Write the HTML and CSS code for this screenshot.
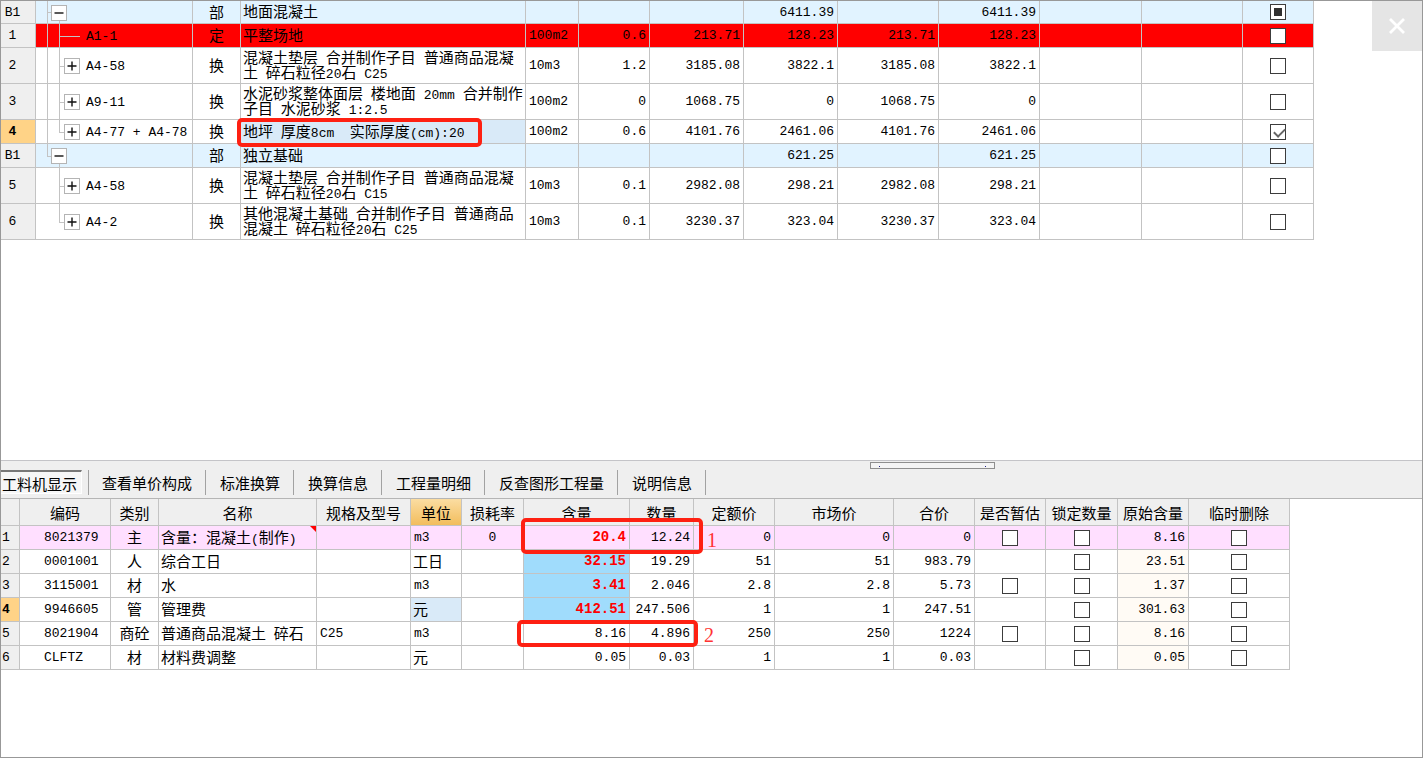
FILE: index.html
```html
<!DOCTYPE html>
<html lang="zh-CN">
<head>
<meta charset="utf-8">
<title>工料机显示</title>
<link rel="stylesheet" href="styles.css">
</head>
<body>
<svg class="defs" aria-hidden="true">
  <symbol id="plus" viewBox="0 0 14 14"><path d="M2.5 7h9M7 2.5v9" stroke="#111" stroke-width="1.4" fill="none"/></symbol>
  <symbol id="minus" viewBox="0 0 14 14"><path d="M2.5 7h9" stroke="#111" stroke-width="1.4" fill="none"/></symbol>
</svg>
<main class="window">
  <section class="pane upper">
    <table class="grid items">
      <colgroup><col class="w35"><col class="w157"><col class="w48"><col class="w285"><col class="w53"><col class="w71"><col class="w94"><col class="w94"><col class="w101"><col class="w101"><col class="w102"><col class="w101"><col class="w71"></colgroup>
      <tbody>
        <tr class="first section"><th scope="row">B1</th><td class="tree root open"><button class="toggle" aria-label="折叠"><svg><use href="#minus"/></svg></button></td><td class="kind">部</td><td class="name">地面混凝土</td><td></td><td></td><td></td><td class="num">6411.39</td><td></td><td class="num">6411.39</td><td></td><td></td><td class="check"><input type="checkbox" class="partial" aria-label="地面混凝土"></td></tr>
        <tr class="alert"><th scope="row">1</th><td class="tree leaf outer"><span class="code">A1-1</span></td><td class="kind">定</td><td class="name">平整场地</td><td class="unit">100m2</td><td class="num">0.6</td><td class="num">213.71</td><td class="num">128.23</td><td class="num">213.71</td><td class="num">128.23</td><td></td><td></td><td class="check"><input type="checkbox" aria-label="A1-1"></td></tr>
        <tr class="tall"><th scope="row">2</th><td class="tree child outer"><button class="toggle" aria-label="展开"><svg><use href="#plus"/></svg></button><span class="code">A4-58</span></td><td class="kind">换</td><td class="name">混凝土垫层<span class="n"> </span>合并制作子目<span class="n"> </span>普通商品混凝<br>土<span class="n"> </span>碎石粒径<span class="n">20</span>石<span class="n"> C25</span></td><td class="unit">10m3</td><td class="num">1.2</td><td class="num">3185.08</td><td class="num">3822.1</td><td class="num">3185.08</td><td class="num">3822.1</td><td></td><td></td><td class="check"><input type="checkbox" aria-label="A4-58"></td></tr>
        <tr class="tall"><th scope="row">3</th><td class="tree child outer"><button class="toggle" aria-label="展开"><svg><use href="#plus"/></svg></button><span class="code">A9-11</span></td><td class="kind">换</td><td class="name">水泥砂浆整体面层<span class="n"> </span>楼地面<span class="n"> 20mm </span>合并制作<br>子目<span class="n"> </span>水泥砂浆<span class="n"> 1:2.5</span></td><td class="unit">100m2</td><td class="num">0</td><td class="num">1068.75</td><td class="num">0</td><td class="num">1068.75</td><td class="num">0</td><td></td><td></td><td class="check"><input type="checkbox" aria-label="A9-11"></td></tr>
        <tr><th scope="row" class="current">4</th><td class="tree child outer last"><button class="toggle" aria-label="展开"><svg><use href="#plus"/></svg></button><span class="code">A4-77 + A4-78</span></td><td class="kind">换</td><td class="name selected">地坪<span class="n"> </span>厚度<span class="n">8cm&nbsp; </span>实际厚度<span class="n">(cm):20</span></td><td class="unit">100m2</td><td class="num">0.6</td><td class="num">4101.76</td><td class="num">2461.06</td><td class="num">4101.76</td><td class="num">2461.06</td><td></td><td></td><td class="check"><input type="checkbox" checked aria-label="A4-77 + A4-78"></td></tr>
        <tr class="section"><th scope="row">B1</th><td class="tree root open end"><button class="toggle" aria-label="折叠"><svg><use href="#minus"/></svg></button></td><td class="kind">部</td><td class="name">独立基础</td><td></td><td></td><td></td><td class="num">621.25</td><td></td><td class="num">621.25</td><td></td><td></td><td class="check"><input type="checkbox" aria-label="独立基础"></td></tr>
        <tr class="tall"><th scope="row">5</th><td class="tree child"><button class="toggle" aria-label="展开"><svg><use href="#plus"/></svg></button><span class="code">A4-58</span></td><td class="kind">换</td><td class="name">混凝土垫层<span class="n"> </span>合并制作子目<span class="n"> </span>普通商品混凝<br>土<span class="n"> </span>碎石粒径<span class="n">20</span>石<span class="n"> C15</span></td><td class="unit">10m3</td><td class="num">0.1</td><td class="num">2982.08</td><td class="num">298.21</td><td class="num">2982.08</td><td class="num">298.21</td><td></td><td></td><td class="check"><input type="checkbox" aria-label="A4-58"></td></tr>
        <tr class="tall"><th scope="row">6</th><td class="tree child last"><button class="toggle" aria-label="展开"><svg><use href="#plus"/></svg></button><span class="code">A4-2</span></td><td class="kind">换</td><td class="name">其他混凝土基础<span class="n"> </span>合并制作子目<span class="n"> </span>普通商品<br>混凝土<span class="n"> </span>碎石粒径<span class="n">20</span>石<span class="n"> C25</span></td><td class="unit">10m3</td><td class="num">0.1</td><td class="num">3230.37</td><td class="num">323.04</td><td class="num">3230.37</td><td class="num">323.04</td><td></td><td></td><td class="check"><input type="checkbox" aria-label="A4-2"></td></tr>
      </tbody>
    </table>
    <div class="mark mark-name"></div>
    <button class="close" aria-label="关闭"><svg viewBox="0 0 16 16"><path d="M1 1l14 14M15 1L1 15" stroke="#fff" stroke-width="2.8" fill="none"/></svg></button>
  </section>

  <section class="pane lower">
    <div class="splitter"><i></i><i></i></div>
    <nav class="tabs">
      <button class="tab active">工料机显示</button>
      <button class="tab">查看单价构成</button>
      <button class="tab">标准换算</button>
      <button class="tab">换算信息</button>
      <button class="tab">工程量明细</button>
      <button class="tab">反查图形工程量</button>
      <button class="tab">说明信息</button>
    </nav>
    <table class="grid detail">
      <colgroup><col class="w19"><col class="w91"><col class="w48"><col class="w158"><col class="w94"><col class="w51"><col class="w62"><col class="w106"><col class="w64"><col class="w81"><col class="w119"><col class="w81"><col class="w71"><col class="w72"><col class="w71"><col class="w101"></colgroup>
      <thead>
        <tr><th></th><th scope="col">编码</th><th scope="col">类别</th><th scope="col">名称</th><th scope="col">规格及型号</th><th scope="col" class="hot">单位</th><th scope="col">损耗率</th><th scope="col">含量</th><th scope="col">数量</th><th scope="col">定额价</th><th scope="col">市场价</th><th scope="col">合价</th><th scope="col">是否暂估</th><th scope="col">锁定数量</th><th scope="col">原始含量</th><th scope="col">临时删除</th></tr>
      </thead>
      <tbody>
        <tr class="main"><th scope="row">1</th><td class="id">8021379</td><td class="kind">主</td><td class="name noted">含量：混凝土<span class="n">(</span>制作<span class="n">)</span></td><td></td><td class="unit">m3</td><td class="rate">0</td><td class="num changed">20.4</td><td class="num">12.24</td><td class="num">0</td><td class="num">0</td><td class="num">0</td><td class="check"><input type="checkbox" aria-label="是否暂估"></td><td class="check"><input type="checkbox" aria-label="锁定数量"></td><td class="num origin">8.16</td><td class="check"><input type="checkbox" aria-label="临时删除"></td></tr>
        <tr><th scope="row">2</th><td class="id">0001001</td><td class="kind">人</td><td class="name">综合工日</td><td></td><td class="name">工日</td><td></td><td class="num changed">32.15</td><td class="num">19.29</td><td class="num">51</td><td class="num">51</td><td class="num">983.79</td><td></td><td class="check"><input type="checkbox" aria-label="锁定数量"></td><td class="num origin">23.51</td><td class="check"><input type="checkbox" aria-label="临时删除"></td></tr>
        <tr><th scope="row">3</th><td class="id">3115001</td><td class="kind">材</td><td class="name">水</td><td></td><td class="unit">m3</td><td></td><td class="num changed">3.41</td><td class="num">2.046</td><td class="num">2.8</td><td class="num">2.8</td><td class="num">5.73</td><td class="check"><input type="checkbox" aria-label="是否暂估"></td><td class="check"><input type="checkbox" aria-label="锁定数量"></td><td class="num origin">1.37</td><td class="check"><input type="checkbox" aria-label="临时删除"></td></tr>
        <tr><th scope="row" class="current">4</th><td class="id">9946605</td><td class="kind">管</td><td class="name">管理费</td><td></td><td class="name selected">元</td><td></td><td class="num changed">412.51</td><td class="num">247.506</td><td class="num">1</td><td class="num">1</td><td class="num">247.51</td><td></td><td class="check"><input type="checkbox" aria-label="锁定数量"></td><td class="num origin">301.63</td><td class="check"><input type="checkbox" aria-label="临时删除"></td></tr>
        <tr><th scope="row">5</th><td class="id">8021904</td><td class="kind">商砼</td><td class="name">普通商品混凝土<span class="n"> </span>碎石</td><td class="unit">C25</td><td class="unit">m3</td><td></td><td class="num">8.16</td><td class="num">4.896</td><td class="num">250</td><td class="num">250</td><td class="num">1224</td><td class="check"><input type="checkbox" aria-label="是否暂估"></td><td class="check"><input type="checkbox" aria-label="锁定数量"></td><td class="num origin">8.16</td><td class="check"><input type="checkbox" aria-label="临时删除"></td></tr>
        <tr><th scope="row">6</th><td class="id">CLFTZ</td><td class="kind">材</td><td class="name">材料费调整</td><td></td><td class="name">元</td><td></td><td class="num">0.05</td><td class="num">0.03</td><td class="num">1</td><td class="num">1</td><td class="num">0.03</td><td></td><td class="check"><input type="checkbox" aria-label="锁定数量"></td><td class="num origin">0.05</td><td class="check"><input type="checkbox" aria-label="临时删除"></td></tr>
      </tbody>
    </table>
    <div class="mark mark-first"></div>
    <span class="mark-no no-first">1</span>
    <div class="mark mark-second"></div>
    <span class="mark-no no-second">2</span>
  </section>
</main>
</body>
</html>
```
FILE: styles.css
```css
:root {
  --line: #c3c3c3;
  --face: #efefef;
  --mark: #fe2012;
  --cjk: "Noto Sans CJK SC", sans-serif;
  --mono: "Liberation Mono", "Noto Sans CJK SC", monospace;
}
* { box-sizing: border-box; }
body { margin: 0; background: #fff; color: #000; font: 15px/15px var(--cjk); }
button { padding: 0; border: 0; background: none; color: inherit; font: inherit; }
.defs { position: absolute; width: 0; height: 0; }

.window {
  display: grid;
  grid-template-rows: 17fr 11fr;
  height: 100vh;
  border: 1px solid #989898;
}
.pane { position: relative; min-height: 0; overflow: hidden; }

/* Data grids */
.grid { width: 1px; table-layout: fixed; border-collapse: separate; border-spacing: 0; }
.grid th, .grid td {
  height: 24px;
  padding: 0;
  border-right: 1px solid var(--line);
  border-bottom: 1px solid var(--line);
  font-weight: normal;
  white-space: nowrap;
  vertical-align: middle;
}
.grid th { background: var(--face); }
.grid tbody th { font: 13px/15px var(--mono); }
.items tbody th { padding-right: 11px; text-align: center; }
.grid .first th, .grid .first td { height: 23px; }
.grid .tall th, .grid .tall td { height: 36px; }
.grid tbody th.current { background: #ffd387; font-weight: bold; }
.grid .kind, .grid .check, .grid .rate { text-align: center; }
.grid .kind { padding-bottom: 2px; }
.grid .name { padding-bottom: 3px; padding-left: 2px; }
.grid .unit { padding-left: 3px; font: 13px/15px var(--mono); }
.grid .num { padding-right: 3px; text-align: right; font: 13px/15px var(--mono); }
.grid .rate { font: 13px/15px var(--mono); }
.n { font: 13px/0 var(--mono); }
.section td { background-color: #e1f3ff; }
.alert td { background-color: #f00; }
.grid td.selected { background: #d9eaf8; }

.w19 { width: 19px; }
.w35 { width: 35px; }
.w48 { width: 48px; }
.w51 { width: 51px; }
.w53 { width: 53px; }
.w62 { width: 62px; }
.w64 { width: 64px; }
.w71 { width: 71px; }
.w72 { width: 72px; }
.w81 { width: 81px; }
.w91 { width: 91px; }
.w94 { width: 94px; }
.w101 { width: 101px; }
.w102 { width: 102px; }
.w106 { width: 106px; }
.w119 { width: 119px; }
.w157 { width: 157px; }
.w158 { width: 158px; }
.w285 { width: 285px; }

/* Tree column: outer guide, inner guide and a short branch */
.tree {
  --outer: 0%;
  --inner: 100%;
  --inner-at: 0%;
  --from: 23px;
  --branch: 5px;
  background-image:
    linear-gradient(var(--line), var(--line)),
    linear-gradient(var(--line), var(--line)),
    linear-gradient(var(--line), var(--line));
  background-position: 11px 0, 23px var(--inner-at), var(--from) 50%;
  background-size: 1px var(--outer), 1px var(--inner), var(--branch) 1px;
  background-repeat: no-repeat;
  background-origin: border-box;
}
.tree.outer { --outer: 100%; }
.tree.last { --inner: 50%; }
.tree.leaf { --branch: 21px; }
.tree.root { --outer: 100%; --inner: 50%; --inner-at: 100%; --from: 11px; }
.tree.end { --outer: 50%; }
.toggle {
  display: inline-block;
  width: 16px;
  height: 16px;
  margin-left: 28px;
  border: 1px solid #b4b4b4;
  background: #fff;
  vertical-align: middle;
}
.root .toggle { margin-left: 15px; }
.toggle svg { display: block; width: 14px; height: 14px; }
.code { padding-left: 6px; font: 13px/15px var(--mono); vertical-align: middle; }
.leaf .code { padding-left: 50px; }

/* Check boxes */
input[type="checkbox"] {
  appearance: none;
  display: block;
  position: relative;
  width: 16px;
  height: 16px;
  margin: 0 auto;
  border: 1px solid #3c3c3c;
  background: #fff;
}
input.partial::after {
  content: "";
  position: absolute;
  inset: 3px;
  background: #303030;
}
input:checked::after {
  content: "";
  position: absolute;
  left: 5px;
  top: 1px;
  width: 5px;
  height: 9px;
  border: solid #666;
  border-width: 0 2px 2px 0;
  transform: rotate(45deg);
}

.close {
  position: absolute;
  top: 0;
  right: 0;
  display: grid;
  place-items: center;
  width: 50px;
  height: 50px;
  background: #e5e5e5;
}
.close svg { width: 16px; height: 16px; }

/* Lower pane */
.lower { border-top: 1px solid #c4c4c8; }
.splitter {
  position: absolute;
  top: 1px;
  left: 869px;
  display: flex;
  justify-content: space-between;
  width: 125px;
  height: 7px;
  padding: 3px 8px 0;
  border: 1px solid #8e8e8e;
  background: #f4f4f4;
}
.splitter i { width: 1px; height: 1px; background: #22228a; }
.tabs {
  display: flex;
  height: 38px;
  padding-top: 9px;
  border-bottom: 1px solid #b5b5b5;
  background: var(--face);
}
.tab { height: 25px; padding: 0 13px; border-right: 1px solid #a2a2a2; }
.tab + .tab { padding-left: 14px; }
.tab.active {
  height: 24px;
  margin-right: 6px;
  padding: 2px 4px 0 1px;
  border-top: 2px solid #777;
  border-right: 1px solid #fff;
  border-bottom: 1px solid #fff;
  background: #f6f6f6;
}
.tab.active + .tab { padding-left: 13px; border-left: 1px solid #a2a2a2; }
.detail thead th { height: 27px; text-align: center; }
.detail thead th.hot { background: linear-gradient(#fbdda2, #f2bd5d); }
.detail tbody th { padding-left: 1px; text-align: left; }
.detail .id { padding-left: 24px; font: 13px/15px var(--mono); }
.main td { background: #ffdfff; }
.grid .changed { background: #a0dcfc; color: #f00; font-size: 14px; font-weight: bold; }
.origin { background: #fffbf5; }
.main .changed, .main .origin { background: #ffdfff; }
.noted { position: relative; }
.noted::after {
  content: "";
  position: absolute;
  top: 0;
  right: 0;
  border-top: 6px solid #f00;
  border-left: 6px solid transparent;
}

/* Reviewer's marks lying over the grids */
.mark { position: absolute; border: 4px solid var(--mark); border-radius: 5px; }
.mark-name { left: 236px; top: 117px; width: 245px; height: 29px; }
.mark-first { left: 520px; top: 57px; width: 182px; height: 36px; }
.mark-second { left: 516px; top: 159px; width: 181px; height: 27px; }
.mark-no { position: absolute; color: #f33; font: 20px/20px "Liberation Serif", serif; }
.no-first { left: 706px; top: 69px; }
.no-second { left: 703px; top: 164px; }
```
